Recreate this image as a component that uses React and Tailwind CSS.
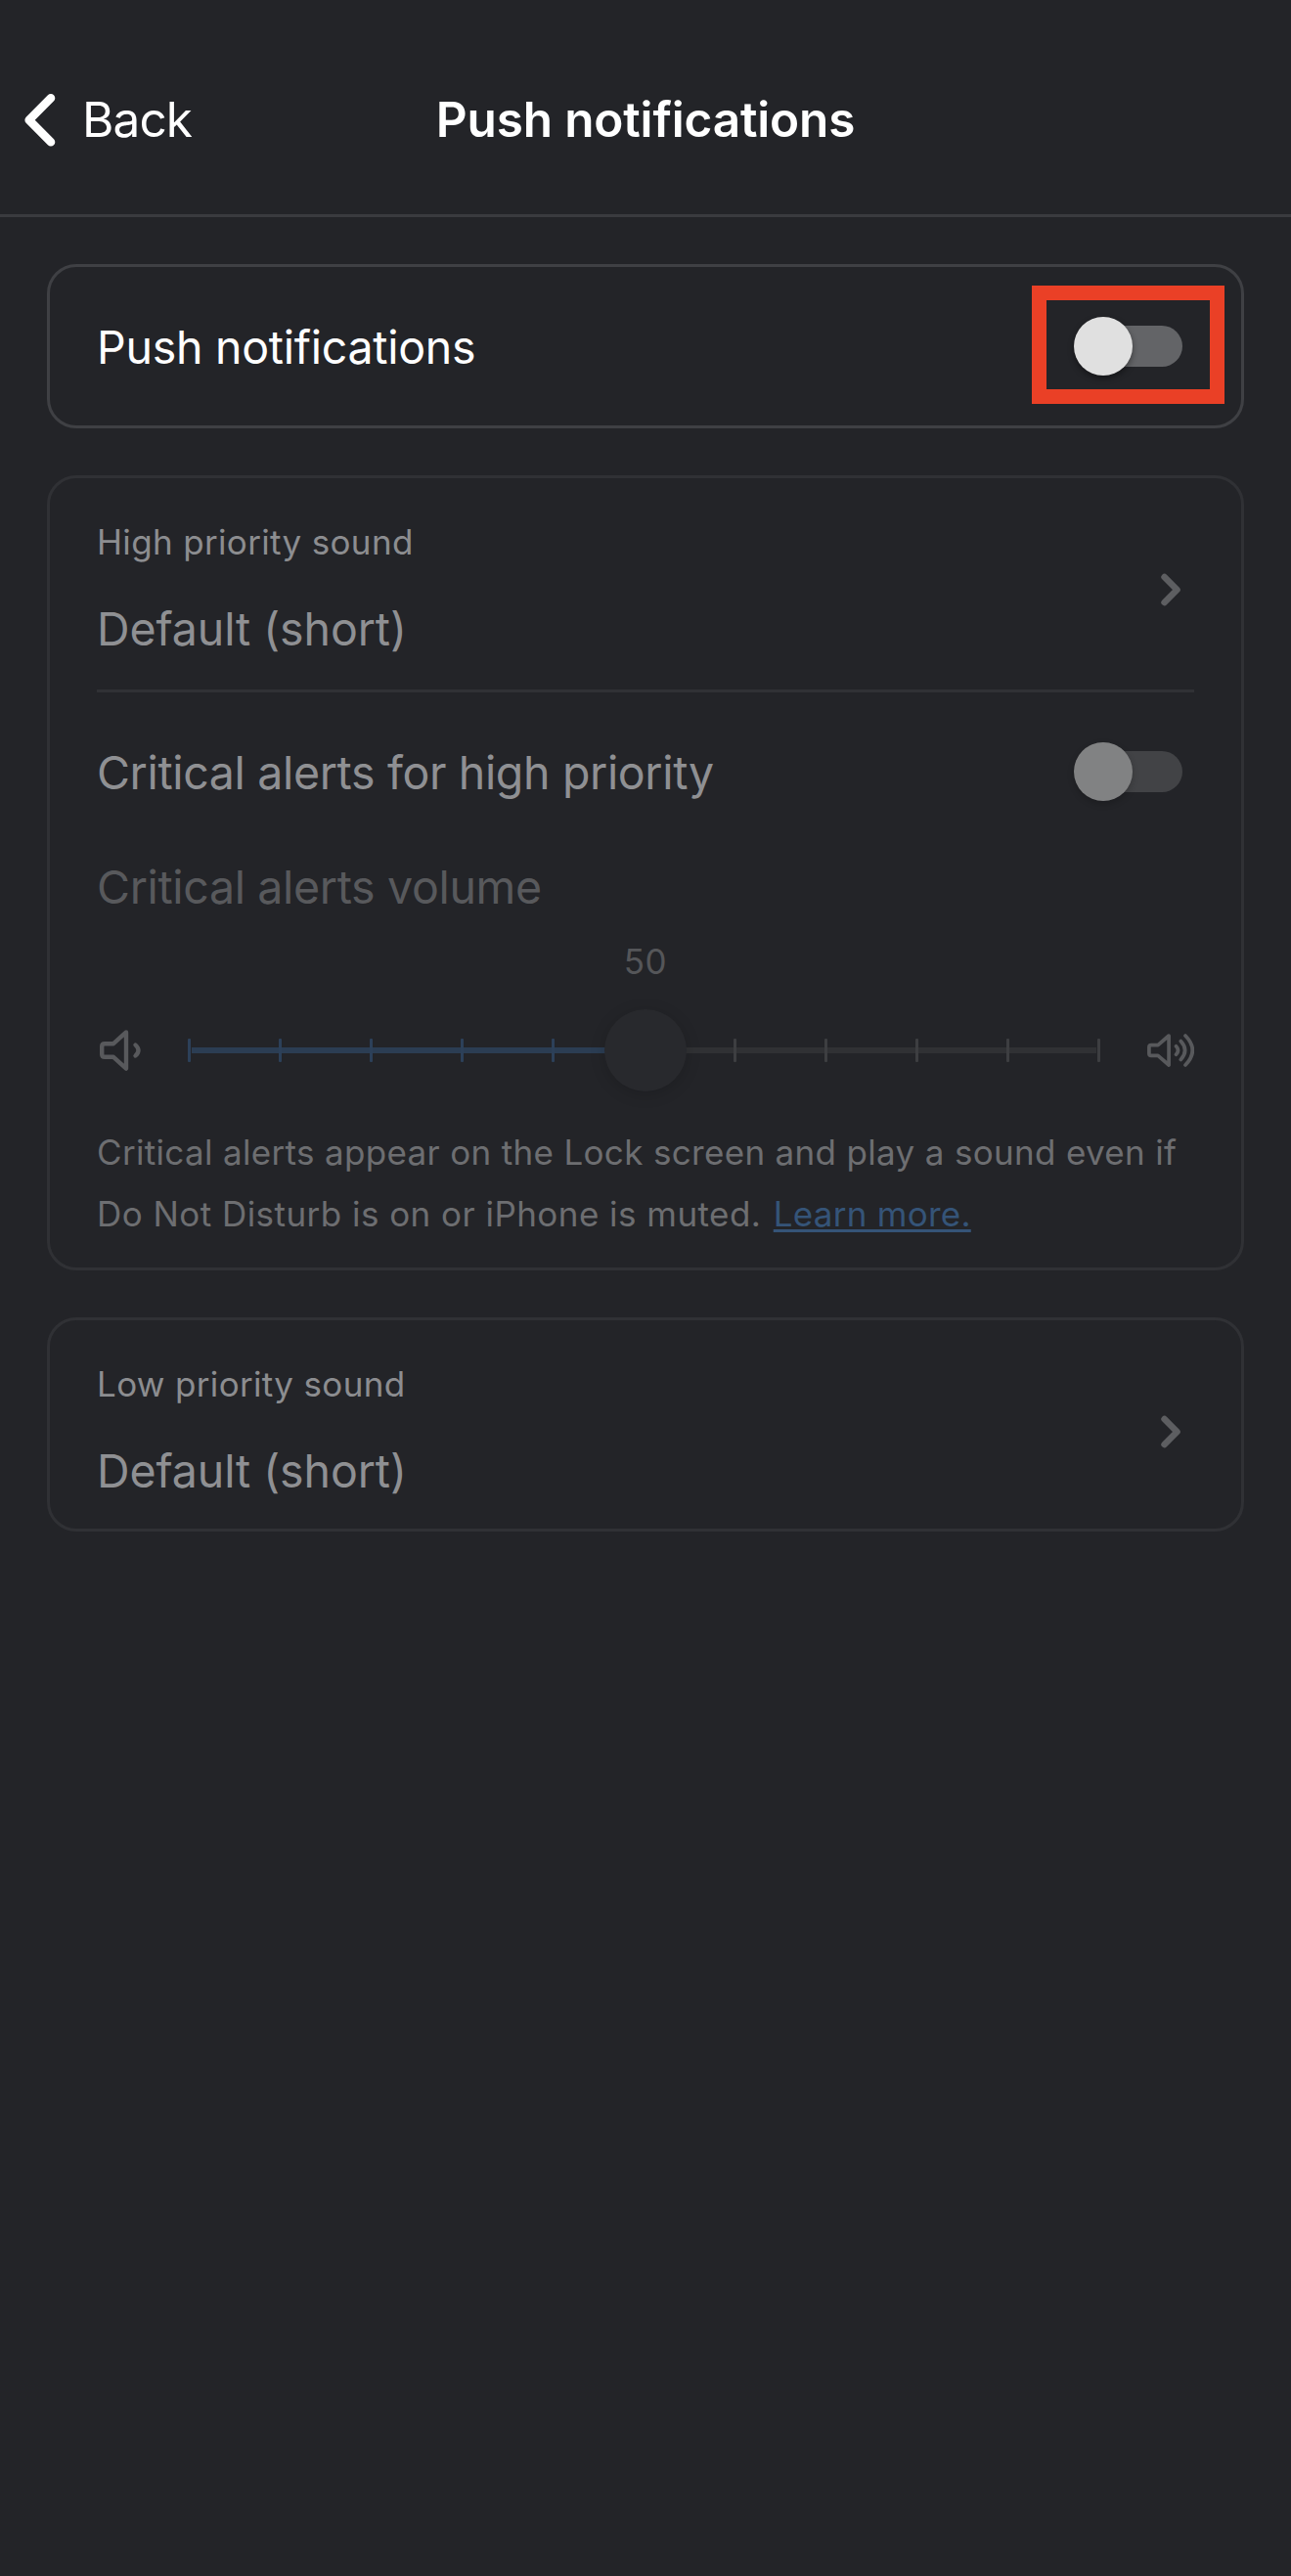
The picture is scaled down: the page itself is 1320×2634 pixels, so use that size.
import React from "react";

function Toggle({ dim = false }) {
  return (
    <div className="mr-3 flex h-[60px] w-[111px] shrink-0 items-center">
      <div
        className={
          dim
            ? "ml-[3px] flex h-[42px] w-[108px] items-center rounded-full bg-[#424346]"
            : "ml-[3px] flex h-[42px] w-[108px] items-center rounded-full bg-[#636467]"
        }
      >
        <div
          className={
            dim
              ? "-ml-[3px] size-[60px] shrink-0 rounded-full bg-[#818283] shadow-[0_3px_7px_rgba(0,0,0,0.2)]"
              : "-ml-[3px] size-[60px] shrink-0 rounded-full bg-[#e0e0e0] shadow-[0_3px_6px_rgba(0,0,0,0.4)]"
          }
        />
      </div>
    </div>
  );
}

function SoundRow({ label, value }) {
  return (
    <div className="flex items-start justify-between pt-[41px]">
      <div>
        <div className="text-[35px] leading-[48px] tracking-[0.34px] text-[#8c8d90]">{label}</div>
        <div className="mt-[35px] text-[46.5px] leading-[60px] tracking-[-0.1px] text-[#8f9093]">{value}</div>
      </div>
      <svg className="mt-[53px] mr-1 size-10" viewBox="0 0 40 40" fill="none" stroke="#5d5e61" strokeWidth="6.6" strokeLinecap="round" strokeLinejoin="round">
        <path d="M13.6 7 26.5 20 13.6 33" />
      </svg>
    </div>
  );
}

function VolumeSlider() {
  return (
    <div className="relative flex h-[84px] w-[933px] items-center">
      <div className="ml-1 h-1.5 w-[464px] bg-[#2b3d53]" />
      <div className="mr-1 h-1.5 flex-1 bg-[#303134]" />
      <div className="absolute inset-0 flex items-center justify-between">
        {[0, 1, 2, 3, 4, 5, 6, 7, 8, 9, 10].map((n) => (
          <div
            key={n}
            className={n < 5 ? "h-6 w-[3px] rounded-[1px] bg-[#2c4059]" : "h-6 w-[3px] rounded-[1px] bg-[#3d3e41]"}
          />
        ))}
      </div>
      <div className="absolute top-0 left-[426px] size-[84px] rounded-full bg-[#28292d] shadow-[0_3px_16px_rgba(0,0,0,0.16)]" />
    </div>
  );
}

export default function App() {
  return (
    <div className="h-[2634px] w-[1320px] overflow-hidden bg-[#232428] font-['Inter',sans-serif]">
      <header className="grid h-[222px] grid-cols-[1fr_auto_1fr] items-start border-b-[3px] border-[#3a3b3f] pt-[92px] text-white">
        <div className="flex items-center">
          <svg className="ml-5 size-[60px] shrink-0" viewBox="0 0 60 60" fill="none" stroke="currentColor" strokeWidth="8.6" strokeLinecap="round" strokeLinejoin="round">
            <path d="M32 8.2 9.7 30.8 32 53.3" />
          </svg>
          <span className="ml-1 text-[49.5px] leading-[60px] tracking-[-0.9px]">Back</span>
        </div>
        <h1 className="text-[49.5px] leading-[60px] font-semibold tracking-[-0.16px]">Push notifications</h1>
      </header>

      <main className="flex flex-col gap-12 px-12 pt-12">
        <section className="relative flex h-[168px] items-center justify-between rounded-[30px] border-[3px] border-[#3f4044] px-12">
          <span className="pt-0.5 text-[46.5px] leading-[60px] tracking-[-0.27px] text-white">Push notifications</span>
          <Toggle />
          <div className="absolute top-[19px] right-[17px] h-[121px] w-[197px] border-[15px] border-[#ea4026]" />
        </section>

        <section className="h-[813px] rounded-[30px] border-[3px] border-[#303135] px-12">
          <div className="h-[219px] border-b-[3px] border-[#303135]">
            <SoundRow label="High priority sound" value="Default (short)" />
          </div>
          <div className="mt-[51px] flex h-[60px] items-center justify-between">
            <span className="pt-0.5 text-[46.5px] leading-[60px] tracking-[-0.35px] text-[#8f9093]">Critical alerts for high priority</span>
            <Toggle dim />
          </div>
          <div className="mt-[58px] text-[46.5px] leading-[60px] tracking-[-0.34px] text-[#58595c]">Critical alerts volume</div>
          <div className="mt-[22px] text-center text-[35px] leading-[48px] tracking-[0.6px] text-[#555659]">50</div>
          <div className="mt-[25px] flex h-[84px] items-center">
            <svg className="size-12 shrink-0" viewBox="0 0 48 48" fill="none" stroke="#58595c" strokeWidth="4.4" strokeLinecap="round" strokeLinejoin="round">
              <path d="M17 17.2H8q-2.8 0-2.8 2.8v8q0 2.8 2.8 2.8h9L30 42.6V5.4Z" />
              <path d="M39.5 18.5q6 5.5 0 11" />
            </svg>
            <div className="ml-[45px]">
              <VolumeSlider />
            </div>
            <svg className="ml-auto size-12 shrink-0" viewBox="0 0 48 48" fill="none" stroke="#58595c" strokeWidth="3.7" strokeLinecap="round" strokeLinejoin="round">
              <path d="M11 18.7H4q-2.1 0-2.1 2.1v6.4q0 2.1 2.1 2.1h7L22.1 39V9Z" />
              <path d="M29.5 19.8q4 4.2 0 8.4M34.3 14.5q8.6 9.5 0 19M39 9q14.6 15 0 30" />
            </svg>
          </div>
          <p className="mt-[31px] whitespace-nowrap text-[35px] leading-[63px] tracking-[0.33px] text-[#6d6e71]">
            Critical alerts appear on the Lock screen and play a sound even if
            <br />
            <span className="tracking-[0.46px]">Do Not Disturb is on or iPhone is muted. </span>
            <a className="ml-[2px] tracking-[0.26px] text-[#355478] underline decoration-[3px] underline-offset-[3px] [text-decoration-skip-ink:none]">Learn more.</a>
          </p>
        </section>

        <section className="h-[219px] rounded-[30px] border-[3px] border-[#303135] px-12">
          <SoundRow label="Low priority sound" value="Default (short)" />
        </section>
      </main>
    </div>
  );
}
